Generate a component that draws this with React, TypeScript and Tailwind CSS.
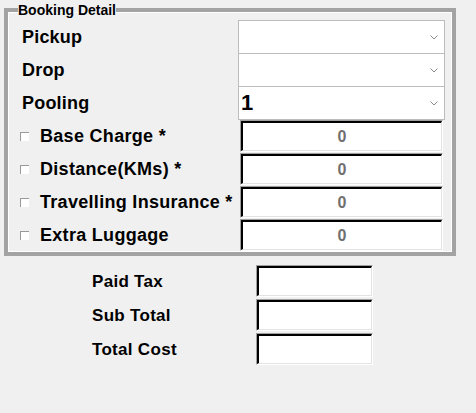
import React from 'react';

const Chevron = () => (
  <svg width="8" height="5" viewBox="0 0 8 5" className="text-[#8a8a8a]">
    <path d="M0.5 0.5 L4 4 L7.5 0.5" fill="none" stroke="currentColor" strokeWidth="1" />
  </svg>
);

const Combo = ({ value, first }: { value?: string; first?: boolean }) => (
  <div
    className={`w-[207px] h-[34px] bg-white border border-[#bcbcbc] flex items-center justify-between pl-[2px] pr-[6px] ${first ? '' : '-mt-px'}`}
  >
    <span className="text-[22px] font-bold leading-none">{value}</span>
    <Chevron />
  </div>
);

// sunken win32-style text box
const Sunken = ({ w, value }: { w: string; value?: string }) => (
  <div className={`${w} h-[32px] border-t border-l border-t-[#a0a0a0] border-l-[#a0a0a0] border-b border-r border-b-white border-r-white`}>
    <div className="h-full border-t-2 border-l-2 border-t-black border-l-black border-b border-r border-b-[#e3e3e3] border-r-[#e3e3e3] bg-white flex items-center justify-center">
      <span className="text-[16px] font-bold text-[#707070]">{value}</span>
    </div>
  </div>
);

const COMBOS = [
  { label: 'Pickup', value: '' },
  { label: 'Drop', value: '' },
  { label: 'Pooling', value: '1' },
];

const CHARGES = ['Base Charge *', 'Distance(KMs) *', 'Travelling Insurance *', 'Extra Luggage'];

const TOTALS = ['Paid Tax', 'Sub Total', 'Total Cost'];

export default function App() {
  return (
    <div className="w-[476px] h-[413px] bg-[#f0f0f0] text-black font-['Liberation_Sans',Arial,sans-serif] overflow-hidden">
      <fieldset className="ml-[4px] mt-[3px] w-[452px] border-4 border-[#a3a3a3] pl-[14px] pr-[7px] pb-[1px] shadow-[inset_1px_1px_0_#fff,inset_-1px_-1px_0_#fff]">
        <legend className="ml-[-4px] px-0 text-[14px] font-bold leading-[14px]">Booking Detail</legend>

        <div className="pt-[3px]">
          {COMBOS.map((c, i) => (
            <div key={c.label} className="flex items-center">
              <div className="w-[216px] text-[18px] font-bold tracking-[0.2px]">{c.label}</div>
              <Combo value={c.value} first={i === 0} />
            </div>
          ))}
        </div>

        <div className="flex flex-col gap-[1px]">
          {CHARGES.map((c) => (
            <div key={c} className="flex items-center">
              <div className="w-[218px] flex items-center">
                <div className="w-[9px] h-[9px] border-t border-l border-[#9a9a9a] bg-white ml-[-2px] mr-[11px]" />
                <span className="text-[18px] font-bold tracking-[0.3px] whitespace-nowrap">{c}</span>
              </div>
              <Sunken w="w-[203px]" value="0" />
            </div>
          ))}
        </div>
      </fieldset>

      <div className="mt-[9px] flex flex-col gap-[2px]">
        {TOTALS.map((t) => (
          <div key={t} className="flex items-center">
            <div className="w-[256px] pl-[92px] pt-[2px] text-[17px] font-bold tracking-[0.3px]">{t}</div>
            <Sunken w="w-[117px]" />
          </div>
        ))}
      </div>
    </div>
  );
}
